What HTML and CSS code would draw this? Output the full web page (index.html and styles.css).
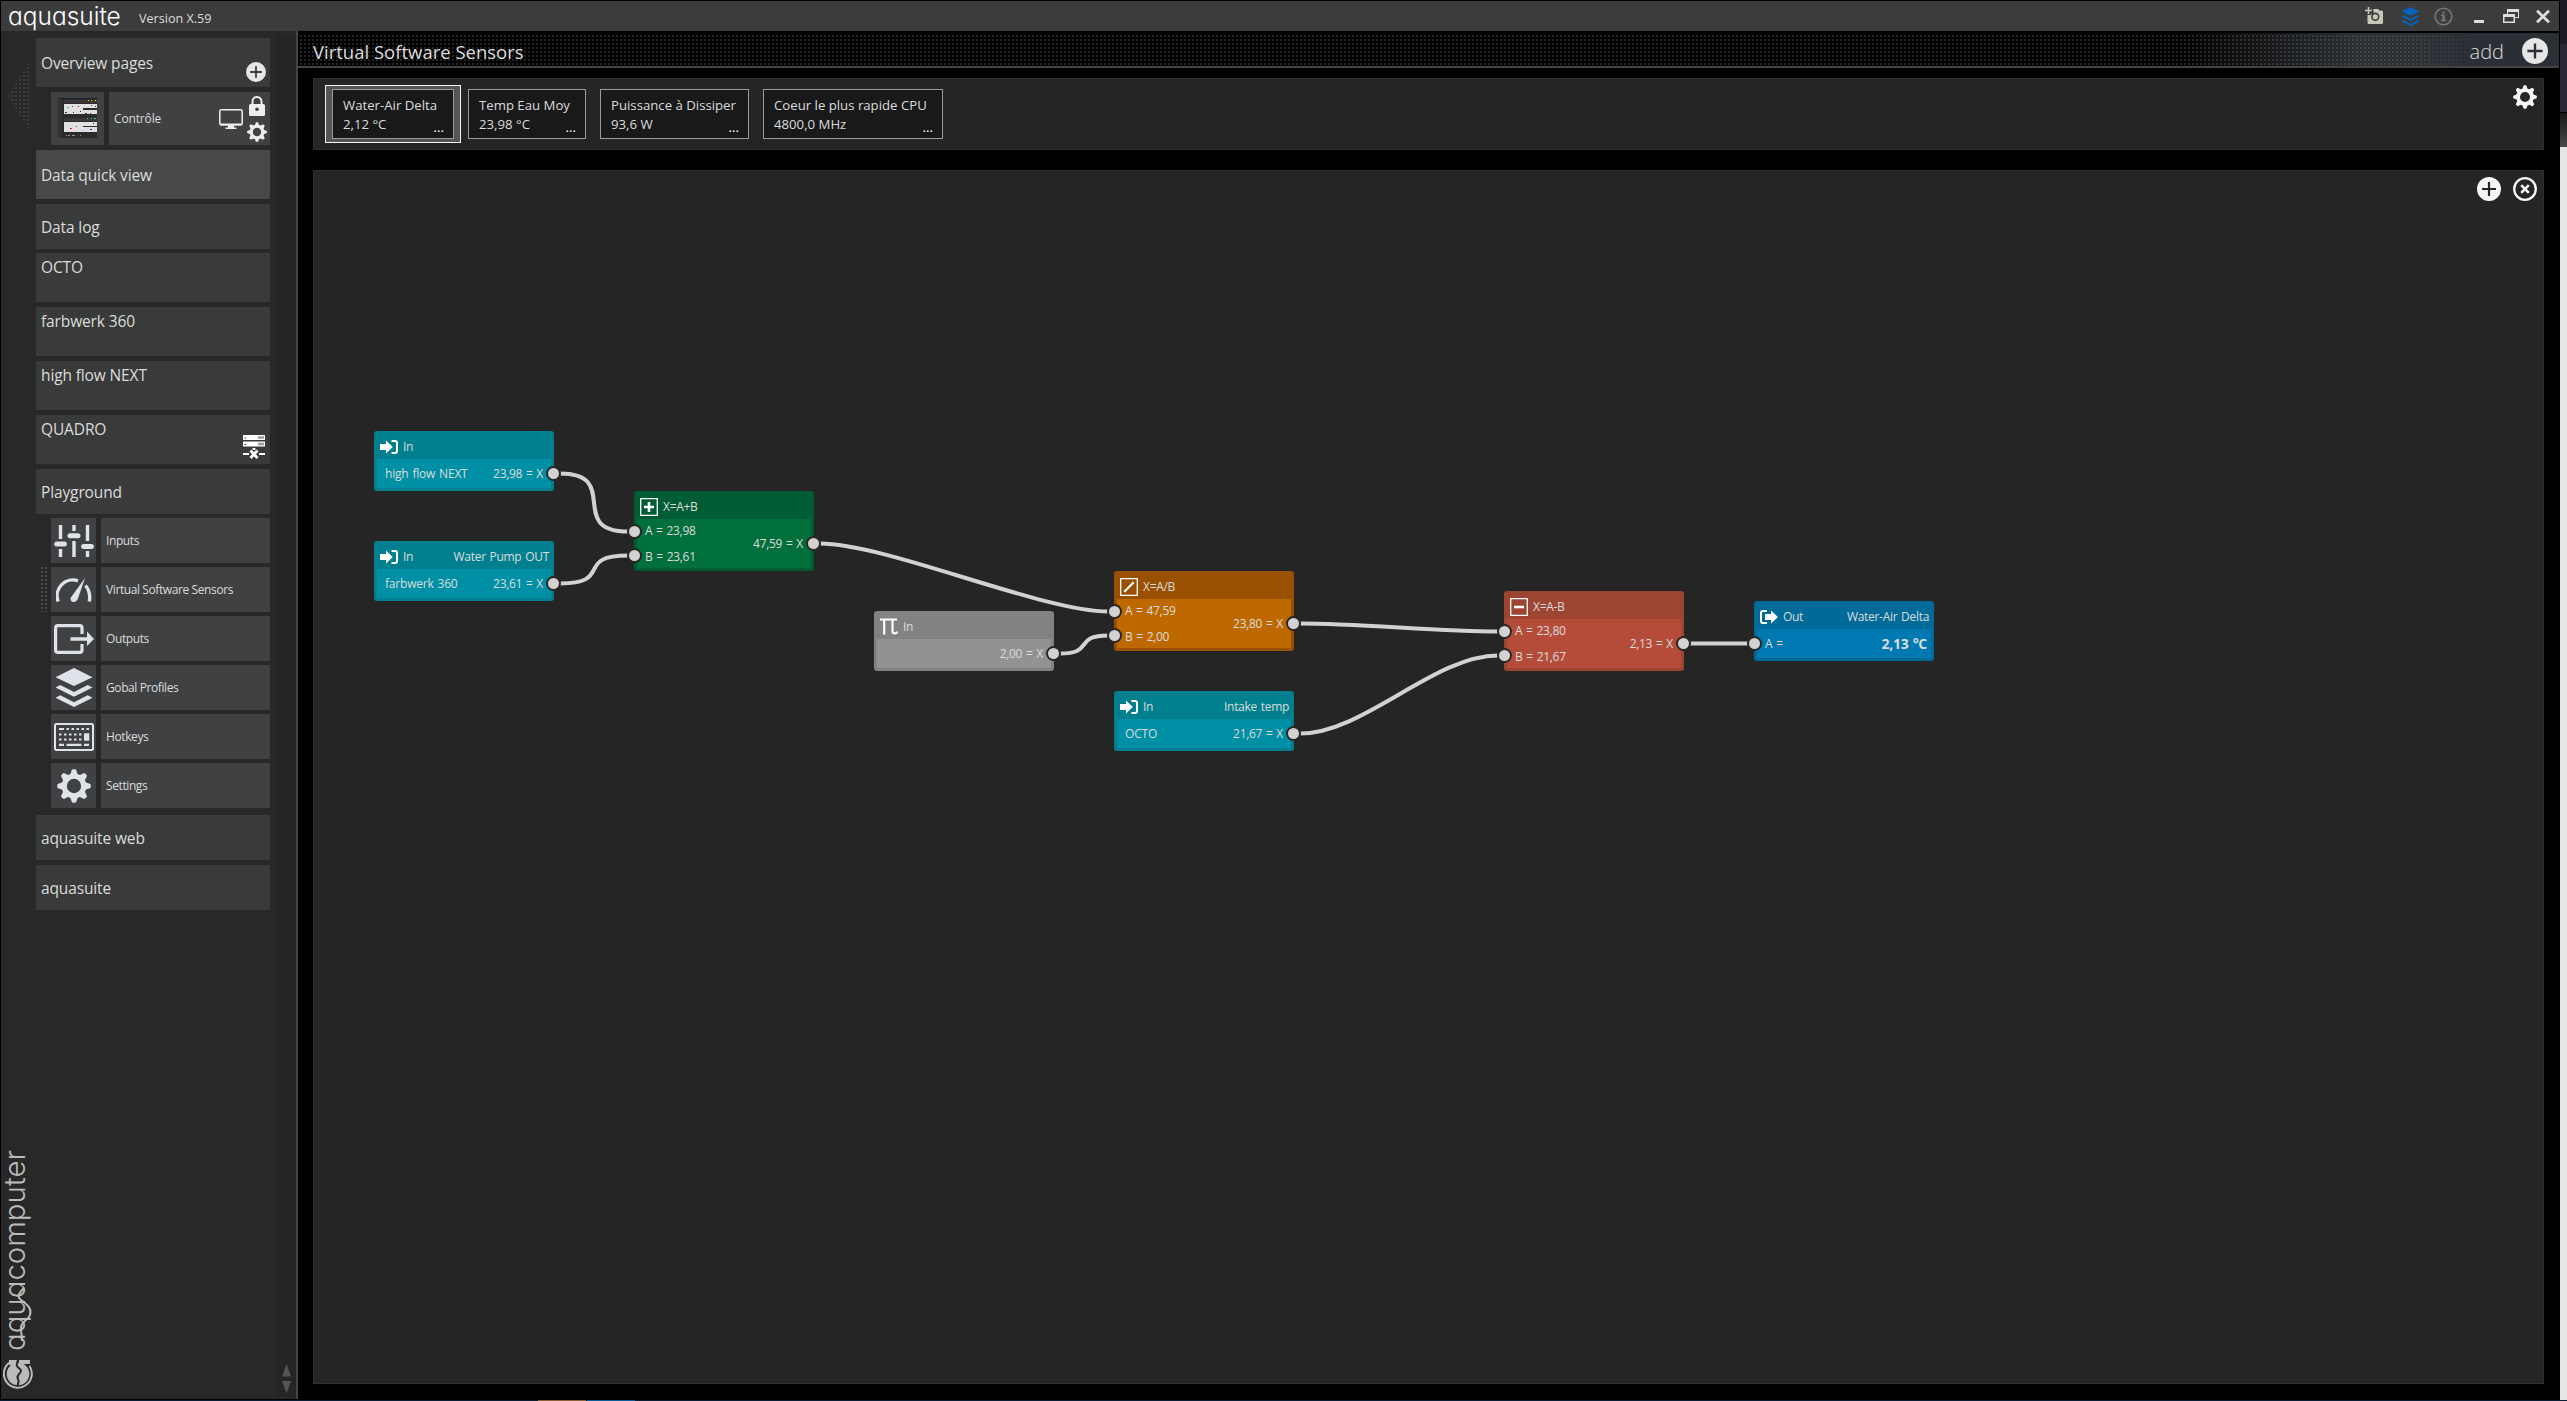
FILE: index.html
```html
<!DOCTYPE html>
<html lang="en">

<head>
    <meta charset="utf-8">
    <title>aquasuite</title>
    <link rel="stylesheet" href="styles.css">
</head>

<body>
    <!-- icon set -->
    <svg class="defs" width="0" height="0">
        <symbol id="i-gear" viewBox="0 0 24 24">
            <circle cx="12" cy="12" r="6.9" fill="none" stroke="currentColor" stroke-width="3.7" />
            <g fill="currentColor">
                <path id="tooth" d="M9 5 10.4 .9Q10.6 .2 11.2 .2H12.8Q13.4 .2 13.6 .9L15 5Z" />
                <use href="#tooth" transform="rotate(45 12 12)" />
                <use href="#tooth" transform="rotate(90 12 12)" />
                <use href="#tooth" transform="rotate(135 12 12)" />
                <use href="#tooth" transform="rotate(180 12 12)" />
                <use href="#tooth" transform="rotate(225 12 12)" />
                <use href="#tooth" transform="rotate(270 12 12)" />
                <use href="#tooth" transform="rotate(315 12 12)" />
            </g>
        </symbol>
        <symbol id="i-add" viewBox="0 0 24 24">
            <path fill="currentColor" fill-rule="evenodd" d="M12 0a12 12 0 1 0 0 24a12 12 0 1 0 0-24zM10.9 5h2.2v5.900H19v2.200h-5.900V19h-2.200v-5.900H5v-2.200h5.900z" />
        </symbol>
        <symbol id="i-cancel" viewBox="0 0 24 24">
            <circle cx="12" cy="12" r="10.8" fill="none" stroke="currentColor" stroke-width="2.3" />
            <path d="M8.2 8.2l7.6 7.6M15.8 8.2l-7.6 7.6" fill="none" stroke="currentColor" stroke-width="2.6" />
        </symbol>
        <symbol id="i-layers" viewBox="0 0 38 40">
            <path fill="currentColor" d="M19 0L38 9.5L19 18.5L0 9.5zM0 20L5 17.5L19 24.5L33 17.5L38 20L19 29.5zM0 30.500L5 28L19 35L33 28L38 30.500L19 40z" />
        </symbol>
        <symbol id="i-in" viewBox="0 0 18 14">
            <path fill="currentColor" d="M0 4h6V.5L12.800 7L6 13.500V10H0z" />
            <path fill="none" stroke="currentColor" stroke-width="2" d="M11.500 1H15q2 0 2 2v8q0 2-2 2h-3.500" />
        </symbol>
        <symbol id="i-out" viewBox="0 0 18 14">
            <path fill="currentColor" d="M5 4h6V.5L18 7L11 13.500V10H5z" />
            <path fill="none" stroke="currentColor" stroke-width="2" d="M7 1H3Q1 1 1 3v8q0 2 2 2h4" />
        </symbol>
    </svg>

    <div class="window">
        <header class="titlebar">
            <span class="brand">aquasuite</span>
            <span class="version">Version X.59</span>
            <div class="window-buttons">
                <svg class="camera" width="19" height="18" viewBox="0 0 19 18">
                    <path fill="#c8c8b8" d="M2.500 8v7.500q0 1.500 1.500 1.500h12.500q1.500 0 1.500-1.500V5q0-1.500-1.500-1.500h-2L13 2H8.500v5H6v1z" />
                    <path stroke="#c8c8b8" stroke-width="1.600" d="M3.500 0v7M0 3.500h7" />
                    <circle cx="10.300" cy="9.800" r="3.400" fill="#c8c8b8" stroke="#3c3c3c" stroke-width="1.600" />
                </svg>
                <svg class="layers" width="19" height="19"><use href="#i-layers" /></svg>
                <svg class="info" width="19" height="19" viewBox="0 0 19 19">
                    <circle cx="9.500" cy="9.500" r="8.300" fill="none" stroke="#777" stroke-width="1.600" />
                    <path fill="#777" d="M8.300 4.500h2.400v2H8.300zM7 7.500h3.700v5.300H12v1.500H7v-1.500h1.300V9H7z" />
                </svg>
                <svg class="min" width="10" height="14" viewBox="0 0 10 14"><path fill="#ddd" d="M0 11h10v3H0z" /></svg>
                <svg class="restore" width="16" height="14" viewBox="0 0 16 14">
                    <path fill="#ddd" fill-rule="evenodd" d="M4 0h12v9h-4V8h3V3H5v2H4zM0 5h12v9H0zM1.500 8v4.500h9V8z" />
                </svg>
                <svg class="close" width="14" height="13" viewBox="0 0 14 13">
                    <path d="M1 .7l12 11.600M13 .7L1 12.300" stroke="#ddd" stroke-width="2.800" />
                </svg>
            </div>
        </header>

        <div class="content">
            <aside class="sidebar">
                <div class="rail">
                    <div class="collapse"></div>
                    <div class="company">
                        <span>aquacomputer</span>
                        <svg class="swoosh" width="18" height="74" viewBox="0 0 18 74">
                            <path fill="none" stroke="#bbb" stroke-width="2" d="M9 2C3 8 2 11 6 14C13 19 17 23 15 29C13 35 6 35 6 42C6 48 7 50 7 55" />
                        </svg>
                        <svg class="drop" width="30" height="30" viewBox="0 0 30 30">
                            <path fill="none" stroke="#bbb" stroke-width="2" d="M6.500 3.500A14 14 0 1 0 26.500 7" />
                            <circle cx="15" cy="15" r="11.300" fill="#bbb" />
                            <path fill="#bbb" d="M6 1h8v5H6zM16 1h11v4H16z" />
                            <path fill="none" stroke="#282828" stroke-width="2" d="M15 1C13 7 13 7 17 10C21 14 12 15 15 20C17 23 14 24 15 27" />
                        </svg>
                    </div>
                </div>

                <nav class="menu">
                    <div class="item">Overview pages
                        <svg class="item-add" width="20" height="20"><use href="#i-add" /></svg>
                    </div>
                    <div class="page">
                        <div class="thumb">
                            <svg width="39" height="40" viewBox="0 0 39 40" shape-rendering="crispEdges">
                                <path fill="#2b2b2b" d="M0 0h39v40H0z" />
                                <path fill="#333" d="M0 1h4v39H0z" />
                                <path fill="#1c2230" d="M0 0h39v1H0z" />
                                <path fill="#3d3638" d="M6 2h33v3H6zM6 20h33v3H6z" />
                                <path fill="#e0e0e0" d="M6 6h33v4H25v2h14v4H6zM6 24h33v4H25v1h14v5H6z" />
                                <path fill="#fd0" d="M30 2h1v1h-1zM33 2h1v1h-1zM37 2h1v1h-1z" />
                                <path fill="#2cc" d="M29 20h1v1h-1zM33 20h1v1h-1zM36 20h2v1h-2zM9 9h2v1H9z" />
                                <path fill="#c22" d="M33 7h1v1h-1zM12 30h2v1h-2zM18 28h1v1h-1zM14 8h1v1h-1z" />
                                <path fill="#22c" d="M32 31h2v1h-2zM35 25h1v1h-1z" />
                                <path fill="#333" d="M9 5h1v1H9zM7 14h2v1H7zM15 14h1v1h-1zM27 15h2v1h-2zM32 15h1v1h-1zM20 8h1v1h-1zM22 13h1v1h-1zM37 8h1v1h-1z" />
                                <path fill="#999" d="M8 37h1v1H8zM10 37h2v1h-2zM14 37h3v1h-3zM22 37h1v1h-1z" />
                            </svg>
                        </div>
                        <div class="page-label">
                            <span>Contrôle</span>
                            <svg class="monitor" width="24" height="20" viewBox="0 0 24 20">
                                <rect x=".8" y=".8" width="22.400" height="15" rx="1.500" fill="none" stroke="#eee" stroke-width="1.500" />
                                <path fill="#eee" d="M1 14.500h22v2H1zM9 16.500h6v2h2.500V20h-11v-1.500H9z" />
                            </svg>
                            <div class="page-tools">
                                <svg width="16" height="20" viewBox="0 0 16 20">
                                    <path fill="none" stroke="#eee" stroke-width="2" d="M3.500 8.500V5.500a4.500 4.500 0 0 1 9 0v3" />
                                    <rect y="8" width="16" height="12" rx="1.500" fill="#eee" />
                                    <circle cx="8" cy="13.300" r="1.800" fill="#404142" />
                                </svg>
                                <svg class="page-gear" width="20" height="20"><use href="#i-gear" /></svg>
                            </div>
                        </div>
                    </div>
                    <div class="item selected">Data quick view</div>
                    <div class="item short">Data log</div>
                    <div class="item device">OCTO</div>
                    <div class="item device">farbwerk 360</div>
                    <div class="item device">high flow NEXT</div>
                    <div class="item device">QUADRO
                        <svg class="offline" width="22" height="24" viewBox="0 0 22 24">
                            <path fill="#fff" d="M0 0h22v5H0zM0 6.500h22v5H0zM0 18h6v2H0zM16 18h6v2h-6z" />
                            <path fill="#393a3a" d="M1.500 2.500h1.500v1H1.500zM1.500 9h1.500v1H1.500zM15.500 1.200h1v2.600h-1zM17.500 1.200h1v2.600h-1zM19.500 1.200h1v2.600h-1zM15.500 7.700h1v2.600h-1zM17.500 7.700h1v2.600h-1zM19.500 7.700h1v2.600h-1z" />
                            <path stroke="#fff" stroke-width="2.800" d="M7.500 15.500l7 7.500M14.500 15.500l-7 7.500M11 13v2" />
                        </svg>
                    </div>
                    <div class="item short">Playground</div>

                    <div class="sub">
                        <div class="sub-icon">
                            <svg width="40" height="34" viewBox="0 0 40 34" fill="none" stroke="#dfe2e8" stroke-linecap="round">
                                <path stroke-width="3.400" stroke-linecap="butt" d="M6.500 1v14M6.500 25v8M20 1v6M20 17v16M33.500 1v16M33.500 27v6" />
                                <path stroke-width="5" d="M2.800 20h7.600M16 11.800h8M29.600 22.500h7.800" />
                            </svg>
                        </div>
                        <div class="sub-label">Inputs</div>
                    </div>
                    <div class="sub current">
                        <div class="sub-icon">
                            <svg width="36" height="24" viewBox="0 0 36 24">
                                <path fill="none" stroke="#dfe2e8" stroke-width="3.400" d="M2.200 23.500A15.800 15.800 0 0 1 22 2.800M29.500 7.500Q35 14 33.300 23.500" />
                                <path fill="#dfe2e8" d="M29 0L22 20.500q-1.500 3.500-4.500 3.500t-3-4z" />
                            </svg>
                        </div>
                        <div class="sub-label">Virtual Software Sensors</div>
                    </div>
                    <div class="sub">
                        <div class="sub-icon">
                            <svg width="40" height="30" viewBox="0 0 40 30">
                                <path fill="none" stroke="#dfe2e8" stroke-width="3.200" d="M28 10V4q0-2.400-2.400-2.400H4Q1.600 1.600 1.600 4v22q0 2.400 2.400 2.400h21.600Q28 28.400 28 26v-6" />
                                <path fill="#dfe2e8" d="M16.500 13.200H33V7.500l7 7.500l-7 7V16.700H16.500z" />
                            </svg>
                        </div>
                        <div class="sub-label">Outputs</div>
                    </div>
                    <div class="sub">
                        <div class="sub-icon"><svg width="38" height="39"><use href="#i-layers" /></svg></div>
                        <div class="sub-label">Gobal Profiles</div>
                    </div>
                    <div class="sub">
                        <div class="sub-icon">
                            <svg width="40" height="28" viewBox="0 0 40 28">
                                <rect x="1" y="1" width="38" height="26" rx="1.500" fill="none" stroke="#dfe2e8" stroke-width="2" />
                                <g fill="none" stroke="#dfe2e8" stroke-width="2.200">
                                    <path stroke-dasharray="5 2.500 2.500 2.500 2.500 2.500 2.500 2.500 2.500 2.500 2.500 10" d="M5 6h31" />
                                    <path stroke-dasharray="2.500 2.500" d="M5 11.500h23M5 16.500h23" />
                                    <path d="M5 21.800h5M12.500 21.800h15M30 21.800h5" />
                                </g>
                                <path fill="#dfe2e8" d="M30 10.300h5.300v7.400H30z" />
                            </svg>
                        </div>
                        <div class="sub-label">Hotkeys</div>
                    </div>
                    <div class="sub last">
                        <div class="sub-icon"><svg width="34" height="34"><use href="#i-gear" /></svg></div>
                        <div class="sub-label">Settings</div>
                    </div>

                    <div class="item tail">aquasuite web</div>
                    <div class="item tail">aquasuite</div>
                </nav>

                <div class="scroll">
                    <svg width="9" height="30" viewBox="0 0 9 30">
                        <path fill="#555" d="M4.500 0L9 12.500H0zM0 17h9L4.500 29.500z" />
                    </svg>
                </div>
            </aside>

            <main class="main">
                <div class="page-head">
                    <h1>Virtual Software Sensors</h1>
                    <span class="add">add</span>
                    <svg width="26" height="26"><use href="#i-add" /></svg>
                </div>

                <section class="panel sensors">
                    <div class="picked">
                        <div class="sensor w1"><p>Water-Air Delta</p><p>2,12 °C</p><i>...</i></div>
                    </div>
                    <div class="sensor w2"><p>Temp Eau Moy</p><p>23,98 °C</p><i>...</i></div>
                    <div class="sensor w3"><p>Puissance à Dissiper</p><p>93,6 W</p><i>...</i></div>
                    <div class="sensor w4"><p>Coeur le plus rapide CPU</p><p>4800,0 MHz</p><i>...</i></div>
                    <svg class="panel-gear" width="24" height="24"><use href="#i-gear" /></svg>
                </section>

                <section class="panel canvas">
                    <div class="canvas-tools">
                        <svg width="24" height="24"><use href="#i-add" /></svg>
                        <svg width="24" height="24"><use href="#i-cancel" /></svg>
                    </div>

                    <!-- connections between ports -->
                    <svg class="wires" width="1600" height="700" fill="none" stroke="#d2d2d2" stroke-width="4">
                        <path d="M246 302.500C308 302.500 252 360.500 314 360.500" />
                        <path d="M246 412.500C300 412.500 260 384.500 314 384.500" />
                        <path d="M506 372.500C572 372.500 728 440.500 794 440.500" />
                        <path d="M746 482.500C781 482.500 759 464.500 794 464.500" />
                        <path d="M986 452.500C1046 452.500 1124 460.500 1184 460.500" />
                        <path d="M986 562.500C1050 562.500 1120 484.500 1184 484.500" />
                        <path d="M1376 472.500H1434" />
                    </svg>

                    <div class="node input n1">
                        <div class="node-head"><svg width="18" height="14"><use href="#i-in" /></svg><span>In</span></div>
                        <div class="node-body"><span class="src">high flow NEXT</span><span class="res">23,98 = X</span></div>
                        <b class="port out"></b>
                    </div>
                    <div class="node input n2">
                        <div class="node-head"><svg width="18" height="14"><use href="#i-in" /></svg><span>In</span><em>Water Pump OUT</em></div>
                        <div class="node-body"><span class="src">farbwerk 360</span><span class="res">23,61 = X</span></div>
                        <b class="port out"></b>
                    </div>
                    <div class="node math plus n3">
                        <div class="node-head">
                            <svg width="18" height="18" viewBox="0 0 18 18"><path fill="none" stroke="#fff" stroke-width="1.300" d="M.7.7h16.600v16.600H.7z" /><path stroke="#fff" stroke-width="2.600" d="M4 9h10M9 4v10" /></svg>
                            <span>X=A+B</span>
                        </div>
                        <div class="node-body">
                            <div class="args"><span>A = 23,98</span><span>B = 23,61</span></div>
                            <span class="res">47,59 = X</span>
                        </div>
                        <b class="port a"></b><b class="port b"></b><b class="port out"></b>
                    </div>
                    <div class="node const n4">
                        <div class="node-head">
                            <svg width="18" height="17" viewBox="0 0 18 17"><path fill="none" stroke="#fff" stroke-width="2.200" d="M0 1.500h17M4.200 1.500v15M12.500 1.500V13q0 2.500 2.500 2.500q2 0 2.200-2" /></svg>
                            <span>In</span>
                        </div>
                        <div class="node-body"><span class="res">2,00 = X</span></div>
                        <b class="port out"></b>
                    </div>
                    <div class="node math div n5">
                        <div class="node-head">
                            <svg width="18" height="18" viewBox="0 0 18 18"><path fill="none" stroke="#fff" stroke-width="1.300" d="M.7.7h16.600v16.600H.7z" /><path stroke="#fff" stroke-width="2.200" d="M4.300 13.700l9.400-9.400" /></svg>
                            <span>X=A/B</span>
                        </div>
                        <div class="node-body">
                            <div class="args"><span>A = 47,59</span><span>B = 2,00</span></div>
                            <span class="res">23,80 = X</span>
                        </div>
                        <b class="port a"></b><b class="port b"></b><b class="port out"></b>
                    </div>
                    <div class="node input n6">
                        <div class="node-head"><svg width="18" height="14"><use href="#i-in" /></svg><span>In</span><em>Intake temp</em></div>
                        <div class="node-body"><span class="src">OCTO</span><span class="res">21,67 = X</span></div>
                        <b class="port out"></b>
                    </div>
                    <div class="node math minus n7">
                        <div class="node-head">
                            <svg width="18" height="18" viewBox="0 0 18 18"><path fill="none" stroke="#fff" stroke-width="1.300" d="M.7.7h16.600v16.600H.7z" /><path stroke="#fff" stroke-width="2.600" d="M4 9h10" /></svg>
                            <span>X=A-B</span>
                        </div>
                        <div class="node-body">
                            <div class="args"><span>A = 23,80</span><span>B = 21,67</span></div>
                            <span class="res">2,13 = X</span>
                        </div>
                        <b class="port a"></b><b class="port b"></b><b class="port out"></b>
                    </div>
                    <div class="node output n8">
                        <div class="node-head"><svg width="18" height="14"><use href="#i-out" /></svg><span>Out</span><em>Water-Air Delta</em></div>
                        <div class="node-body"><span class="src">A =</span><strong>2,13 °C</strong></div>
                        <b class="port a"></b>
                    </div>
                </section>
            </main>
        </div>
    </div>

    <!-- what shows behind the window -->
    <div class="behind"></div>
    <div class="taskbar"><i class="t1"></i><i class="t2"></i></div>
</body>

</html>
```
FILE: styles.css
```css
* {
    box-sizing: border-box;
}

body {
    margin: 0;
    width: 2567px;
    height: 1401px;
    overflow: hidden;
    background: #000;
    color: #dcdcdc;
    font-family: "Open Sans", "Noto Sans", sans-serif;
    display: grid;
    grid-template-columns: 2560px 7px;
    grid-template-rows: 1400px 1px;
}

svg {
    display: block;
    flex: none;
}

.defs {
    position: absolute;
}

.window {
    padding: 1px 1px 1px;
    display: flex;
    flex-direction: column;
}

/* title bar */
.titlebar {
    height: 30px;
    width: 2558px;
    background: #3c3c3c;
    display: flex;
    align-items: center;
}

.brand {
    width: 111px;
    margin-left: 7px;
    font: 300 24.5px/28px Inter, sans-serif;
    font-feature-settings: "cv11";
    color: #fff;
    white-space: nowrap;
}

.version {
    margin: 5px 0 0 20px;
    font-size: 12.6px;
    line-height: 18px;
}

.window-buttons {
    margin-left: auto;
    display: flex;
    align-items: center;
    padding-right: 9px;
}

.camera {
    margin-right: 17px;
}

.layers {
    color: #0562bd;
    margin-right: 14px;
}

.info {
    margin-right: 21px;
}

.min {
    margin-right: 19px;
}

.restore {
    margin-right: 17px;
}

.content {
    flex: 1;
    display: flex;
}

/* sidebar */
.sidebar {
    width: 297px;
    background: #282828;
    border-right: 2px solid #444;
    display: flex;
}

.rail {
    width: 35px;
    display: flex;
    flex-direction: column;
    justify-content: space-between;
}

.collapse {
    width: 24px;
    height: 74px;
    margin: 28px 0 0 6px;
    background: conic-gradient(from 270deg at 2px 2px, #3e3e3e 90deg, transparent 0) 0 0 / 4px 4px;
    clip-path: polygon(100% 0, 100% 100%, 0 50%);
}

.company {
    position: relative;
    width: 35px;
    height: 248px;
}

.company span {
    position: absolute;
    left: -2px;
    bottom: 48px;
    writing-mode: vertical-rl;
    transform: rotate(180deg);
    font: 300 29.4px/32px Inter, sans-serif;
    font-feature-settings: "cv11";
    color: #bbb;
    white-space: nowrap;
}

.swoosh {
    position: absolute;
    left: 14px;
    bottom: 39px;
}

.drop {
    position: absolute;
    left: 2px;
    bottom: 10px;
}

.menu {
    width: 234px;
    padding-top: 7px;
}

.item {
    position: relative;
    height: 49px;
    margin-bottom: 5px;
    padding: 13px 5px 0;
    background: #393a3a;
    font-size: 15.5px;
    line-height: 25px;
    letter-spacing: -.13px;
    white-space: nowrap;
}

.item.selected {
    background: #474948;
}

.item.short,
.item.tail {
    height: 45px;
    margin-bottom: 4px;
    padding-top: 11px;
}

.item.tail {
    margin-bottom: 5px;
}

.item.device {
    padding-top: 2px;
}

.item-add {
    position: absolute;
    right: 4px;
    bottom: 5px;
    color: #e6e6e6;
}

.offline {
    position: absolute;
    right: 5px;
    bottom: 5px;
}

.page {
    display: flex;
    gap: 5px;
    height: 53px;
    margin: 0 0 5px 15px;
}

.thumb {
    width: 53px;
    padding: 6px 7px;
    background: #404142;
}

.page-label {
    flex: 1;
    display: flex;
    align-items: center;
    padding-left: 5px;
    background: #404142;
    font-size: 12px;
    letter-spacing: -.15px;
}

.monitor {
    margin: 0 4px 0 auto;
}

.page-tools {
    width: 20px;
    margin-right: 3px;
    display: flex;
    flex-direction: column;
    align-items: center;
    gap: 6px;
    color: #eee;
}

.sub {
    position: relative;
    display: flex;
    gap: 5px;
    height: 45px;
    margin: 0 0 4px 15px;
}

.sub.last {
    margin-bottom: 7px;
}

.sub.current::before {
    content: "";
    position: absolute;
    left: -10px;
    top: 0;
    width: 6px;
    height: 45px;
    background: conic-gradient(from 270deg at 2px 2px, #4a4a4a 90deg, transparent 0) 0 0 / 4px 4px;
}

.sub-icon {
    width: 45px;
    background: #404142;
    color: #dfe2e8;
    display: grid;
    place-items: center;
}

.sub-label {
    flex: 1;
    padding: 0 5px;
    background: #404142;
    font-size: 12px;
    line-height: 45px;
    letter-spacing: -.4px;
    white-space: nowrap;
}

.scroll {
    width: 19px;
    margin: 4px 0 2px 7px;
    background: #252525;
    display: flex;
    align-items: flex-end;
    justify-content: center;
    padding-bottom: 3px;
}

/* main area */
.main {
    flex: 1;
    display: flex;
    flex-direction: column;
    padding-top: 2px;
}

.page-head {
    height: 35px;
    border-bottom: 2px solid #444;
    padding: 0 11px 0 15px;
    display: flex;
    align-items: center;
    background:
        linear-gradient(90deg, transparent 2120px, #2b2e35 2180px),
        conic-gradient(from 270deg at 2px 2px, #6a6a6a55 90deg, transparent 0) 2px 2px / 4px 4px,
        linear-gradient(90deg, #000 1880px, #2c3034 2060px, #2b2e35);
}

h1 {
    margin: 5px auto 0 0;
    font-size: 18.5px;
    font-weight: 400;
    line-height: 26px;
}

.add {
    margin: 5px 18px 0 0;
    font-size: 20px;
    font-weight: 300;
    line-height: 26px;
}

.page-head svg {
    color: #e6e6e6;
    margin-top: 3px;
}

.panel {
    position: relative;
    margin: 0 15px;
    background: #252525;
    border: 1px solid #303030;
}

.sensors {
    height: 72px;
    margin-top: 10px;
    display: flex;
    align-items: flex-start;
    padding: 6px 0 0 11px;
}

.picked {
    padding: 3px 6px;
    border: 1px solid #f4f4f4;
    background: #555;
    margin-right: 7px;
}

.sensor {
    position: relative;
    height: 50px;
    margin: 4px 14px 0 0;
    padding: 6px 10px;
    border: 1px solid #9a9a9a;
    background: #191919;
    font-size: 13.2px;
    line-height: 19px;
    white-space: nowrap;
}

.picked .sensor {
    margin: 0;
}

.w1 {
    width: 122px;
}

.w2 {
    width: 118px;
}

.w3 {
    width: 149px;
}

.w4 {
    width: 180px;
}

.sensor p {
    margin: 0;
}

.sensor i {
    position: absolute;
    right: 9px;
    bottom: 3px;
    font-style: normal;
    color: #fff;
    line-height: 16px;
}

.panel-gear {
    margin: 0 6px 0 auto;
    color: #f5f5f5;
}

.canvas {
    flex: 1;
    margin-top: 20px;
    margin-bottom: 15px;
}

.canvas-tools {
    display: flex;
    justify-content: flex-end;
    gap: 12px;
    padding: 6px 6px 0;
    color: #f5f5f5;
}

.wires {
    position: absolute;
    left: 0;
    top: 0;
}

/* nodes */
.node {
    position: absolute;
    width: 180px;
    height: 60px;
    padding: 0 3px 3px;
    border-radius: 3px;
    display: flex;
    flex-direction: column;
    font-size: 12px;
    line-height: 16px;
    letter-spacing: -.3px;
    word-spacing: 1px;
    white-space: nowrap;
}

.node.math {
    height: 80px;
}

.n1 { left: 60px; top: 260px; }
.n2 { left: 60px; top: 370px; }
.n3 { left: 320px; top: 320px; }
.n4 { left: 560px; top: 440px; }
.n5 { left: 800px; top: 400px; }
.n6 { left: 800px; top: 520px; }
.n7 { left: 1190px; top: 420px; }
.n8 { left: 1440px; top: 430px; }

.input { background: #00808f; }
.input .node-body { background: #0090a5; }
.plus { background: #005c32; }
.plus .node-body { background: #006f3c; }
.const { background: #828282; }
.const .node-body { background: #929292; }
.div { background: #995000; }
.div .node-body { background: #be6800; }
.minus { background: #9e4432; }
.minus .node-body { background: #b54c3a; }
.output { background: #006a98; }
.output .node-body { background: #0079b2; }

.node-head {
    height: 28px;
    padding: 3px 2px 0 3px;
    display: flex;
    align-items: center;
    gap: 5px;
    color: #fff;
}

.node-head span,
.node-head em {
    color: #dcdcdc;
}

.input .node-head span {
    padding-top: 1px;
}

.node-head em {
    margin-left: auto;
    font-style: normal;
}

.node-body {
    flex: 1;
    display: flex;
    align-items: center;
    padding: 0 8px;
}

.src {
    letter-spacing: -.2px;
}

.math .node-body {
    align-items: stretch;
}

.args {
    display: flex;
    flex-direction: column;
    gap: 10px;
    padding-top: 4px;
}

.res,
.node-body strong {
    margin-left: auto;
    align-self: center;
}

.node-body strong {
    margin-right: -4px;
    font-size: 14px;
}

.port {
    position: absolute;
    width: 15px;
    height: 15px;
    border-radius: 50%;
    border: 2px solid #2a2626;
    background: #d2d2d2;
}

.port.out { right: -7px; top: 35px; }
.port.a { left: -7px; top: 33px; }
.port.b { left: -7px; top: 57px; }
.math .port.out { top: 45px; }
.output .port.a { top: 35px; }

/* desktop */
.behind {
    background: linear-gradient(#1c1a24 44px, #282632 44px, #282632 112px, #000 112px, #000 113px, #161616 113px, #484848 147px, #e5e5e5 147px);
}

.taskbar {
    grid-column: 1 / 3;
    background: #0a1c30;
    display: flex;
    gap: 1px;
    padding-left: 538px;
}

.taskbar i {
    width: 48px;
    background: #8a6038;
}

.taskbar .t2 {
    background: #0c5a96;
}
```
